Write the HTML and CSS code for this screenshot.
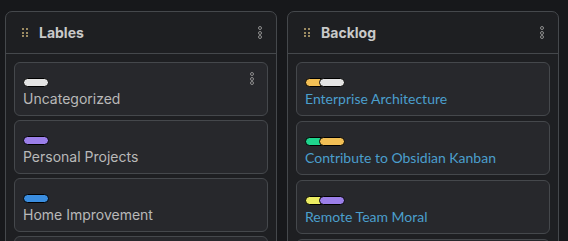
FILE: index.html
```html
<!DOCTYPE html>
<html lang="en">
<head>
  <meta charset="UTF-8">
  <meta name="viewport" content="width=device-width, initial-scale=1.0">
  <title>Kanban</title>
  <link rel="stylesheet" href="styles.css">
</head>
<body>
  <div class="board">
    <div class="lane">
      <div class="lane-header">
        <span class="grip"><i></i><i></i><i></i><i></i><i></i><i></i></span>
        <span class="lane-title">Lables</span>
        <span class="more"><i></i><i></i><i></i></span>
      </div>
      <div class="lane-items">
        <div class="item">
          <div class="item-body">
            <div class="tags"><span class="tag white"></span></div>
            <div class="item-title">Uncategorized</div>
          </div>
          <span class="more item-more"><i></i><i></i><i></i></span>
        </div>
        <div class="item">
          <div class="item-body">
            <div class="tags"><span class="tag purple"></span></div>
            <div class="item-title">Personal Projects</div>
          </div>
        </div>
        <div class="item">
          <div class="item-body">
            <div class="tags"><span class="tag blue"></span></div>
            <div class="item-title">Home Improvement</div>
          </div>
        </div>
        <div class="item"></div>
      </div>
    </div>

    <div class="lane">
      <div class="lane-header">
        <span class="grip"><i></i><i></i><i></i><i></i><i></i><i></i></span>
        <span class="lane-title">Backlog</span>
        <span class="more"><i></i><i></i><i></i></span>
      </div>
      <div class="lane-items">
        <div class="item">
          <div class="item-body">
            <div class="tags"><span class="tag yellow"></span><span class="tag white"></span></div>
            <div class="item-title link">Enterprise Architecture</div>
          </div>
        </div>
        <div class="item">
          <div class="item-body">
            <div class="tags"><span class="tag green"></span><span class="tag yellow"></span></div>
            <div class="item-title link">Contribute to Obsidian Kanban</div>
          </div>
        </div>
        <div class="item">
          <div class="item-body">
            <div class="tags"><span class="tag lime"></span><span class="tag purple"></span></div>
            <div class="item-title link">Remote Team Moral</div>
          </div>
        </div>
        <div class="item"></div>
      </div>
    </div>
  </div>
</body>
</html>
```

FILE: styles.css
```css
html, body {
  margin: 0;
  height: 100%;
  overflow: hidden;
}

body {
  background-color: #17181b;
  font-family: Inter, "Noto Sans", sans-serif;
}

.board {
  display: flex;
  gap: 10px;
  padding: 11px 0 0 5px;
}

.lane {
  width: 270px;
  border: 1px solid #45484c;
  border-radius: 7px;
  background-color: #1e1f22;
  height: 300px;
}

.lane-header {
  display: flex;
  align-items: center;
  height: 41px;
  padding: 0 14px 0 16px;
  border-bottom: 1px solid #45484c;
}

.grip {
  display: grid;
  grid-template-columns: 2px 2px;
  column-gap: 2px;
  row-gap: 1.5px;
  margin-right: 11px;
}

.grip i {
  width: 2px;
  height: 2px;
  background-color: #9c8b62;
}

.lane-title {
  flex: 1;
  font-size: 14px;
  font-weight: 700;
  color: #c9c9c9;
}

.more {
  display: flex;
  flex-direction: column;
  gap: 0.5px;
}

.more i {
  width: 2px;
  height: 2px;
  border: 1px solid #8d8d8d;
  border-radius: 50%;
}

.lane-items {
  display: flex;
  flex-direction: column;
  gap: 4px;
  padding: 8px 8px 0 8px;
}

.lane:last-child .lane-items {
  gap: 5px;
}

.item {
  display: flex;
  align-items: flex-start;
  height: 52px;
  border: 1px solid #45484c;
  border-radius: 6px;
  background-color: #27282c;
  flex-shrink: 0;
}

.item-body {
  flex: 1;
  padding: 15px 8px 0 8px;
}

.item-more {
  margin: 9px 13px 0 0;
}

.tags {
  display: flex;
  height: 9px;
}

.tag {
  width: 24px;
  height: 7px;
  border: 1px solid #000;
  border-radius: 5px;
}

.tag + .tag {
  margin-left: -12px;
}

.tag.white { background-color: #e3e3e3; }
.tag.purple { background-color: #9b7fe9; }
.tag.blue { background-color: #3a8ddf; }
.tag.yellow { background-color: #f2bf55; }
.tag.green { background-color: #1fd48d; }
.tag.lime { background-color: #ecec62; }

.item-title {
  margin-top: 3px;
  font-size: 14px;
  line-height: 18px;
  color: #b9b9b9;
}

.item-title.link {
  font-family: Lato, sans-serif;
  font-size: 14px;
  color: #4b9fcc;
}
```
